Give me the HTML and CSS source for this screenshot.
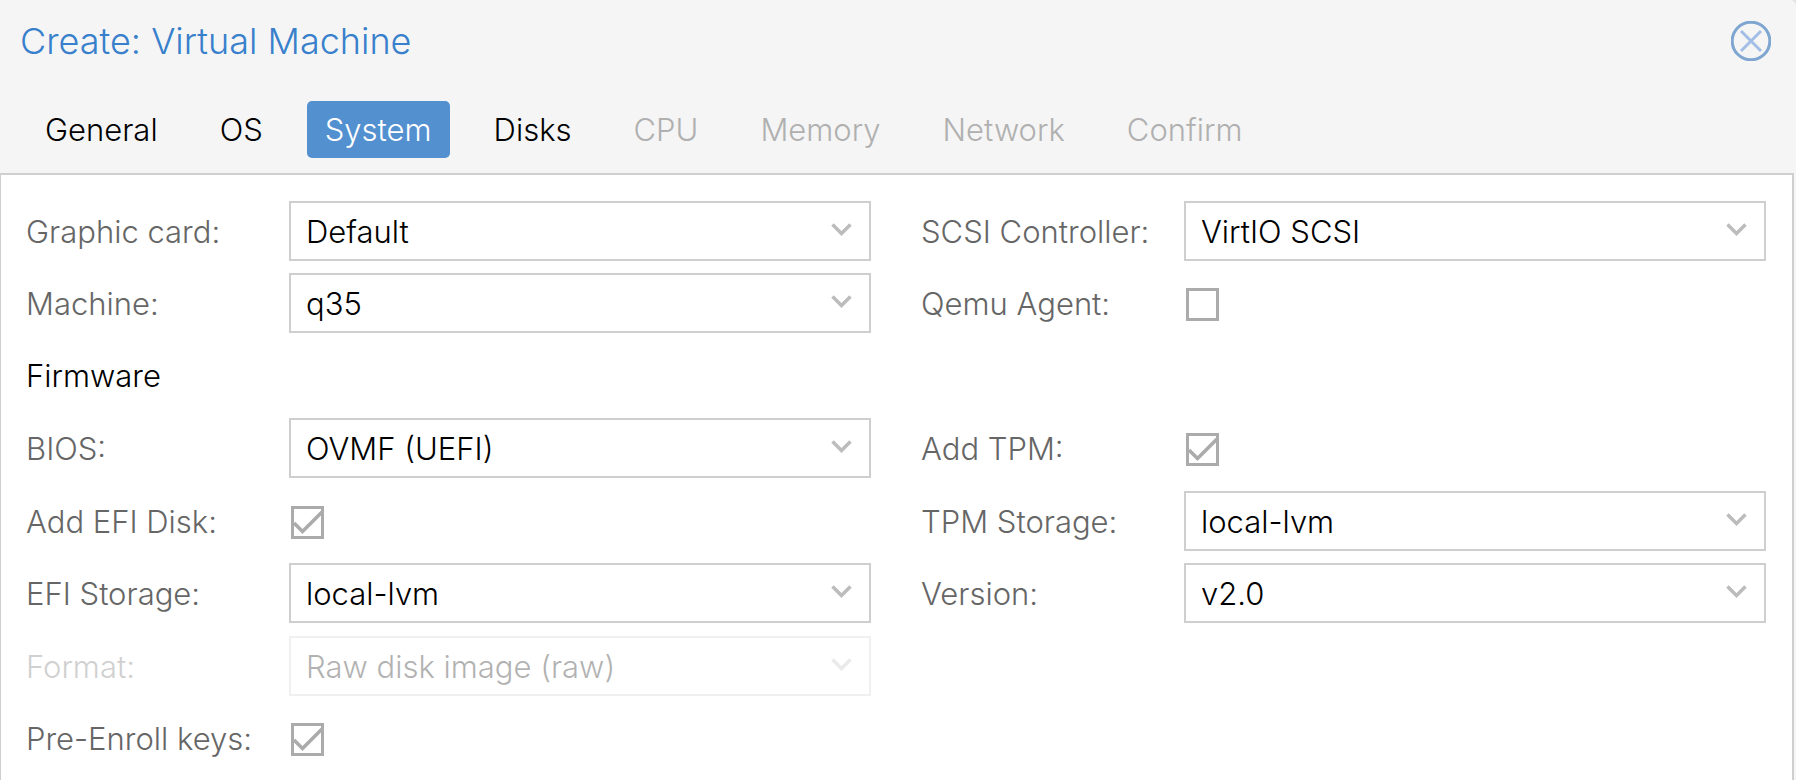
FILE: index.html
```html
<!DOCTYPE html>
<html lang="en">
<head>
<meta charset="utf-8">
<title>Create: Virtual Machine</title>
<link rel="stylesheet" href="styles.css">
</head>
<body>
<svg class="symbols" aria-hidden="true">
  <symbol id="chevron" viewBox="0 0 22 14"><path d="M1.500 1.500 10.500 10.500 19.500 1.500" fill="none" stroke="currentColor" stroke-width="3.500"/></symbol>
  <symbol id="tick" viewBox="0 0 33 33"><path d="M3 17 11.500 25.500 31 6" fill="none" stroke="currentColor" stroke-width="3.600"/></symbol>
</svg>
<main class="dialog">
  <header class="dialog-header">
    <h1 class="title">Create: Virtual Machine</h1>
    <button class="close" type="button" aria-label="Close">
      <svg viewBox="0 0 40 40" aria-hidden="true"><circle cx="20" cy="20" r="18.800" fill="none" stroke="#7fa6d0" stroke-width="3"/><path d="M10 10 30 30M30 10 10 30" fill="none" stroke="#a3bee6" stroke-width="3"/></svg>
    </button>
  </header>
  <nav class="tabs" aria-label="Steps">
    <button class="tab" type="button">General</button>
    <button class="tab" type="button">OS</button>
    <button class="tab active" type="button" aria-current="step">System</button>
    <button class="tab" type="button">Disks</button>
    <button class="tab" type="button" disabled>CPU</button>
    <button class="tab" type="button" disabled>Memory</button>
    <button class="tab" type="button" disabled>Network</button>
    <button class="tab" type="button" disabled>Confirm</button>
  </nav>
  <form class="panel">
    <div class="column">
      <div class="field"><label for="vga">Graphic card:</label><div class="combo"><select id="vga"><option>Default</option></select><svg class="arrow"><use href="#chevron"/></svg></div></div>
      <div class="field"><label for="machine">Machine:</label><div class="combo"><select id="machine"><option>q35</option></select><svg class="arrow"><use href="#chevron"/></svg></div></div>
      <h2 class="section">Firmware</h2>
      <div class="field"><label for="bios">BIOS:</label><div class="combo"><select id="bios"><option>OVMF (UEFI)</option></select><svg class="arrow"><use href="#chevron"/></svg></div></div>
      <div class="field"><label for="efi">Add EFI Disk:</label><div class="check"><input id="efi" type="checkbox" checked><svg class="tick"><use href="#tick"/></svg></div></div>
      <div class="field"><label for="efistorage">EFI Storage:</label><div class="combo"><select id="efistorage"><option>local-lvm</option></select><svg class="arrow"><use href="#chevron"/></svg></div></div>
      <div class="field disabled"><label for="format">Format:</label><div class="combo"><select id="format" disabled><option>Raw disk image (raw)</option></select><svg class="arrow"><use href="#chevron"/></svg></div></div>
      <div class="field"><label for="keys">Pre-Enroll keys:</label><div class="check"><input id="keys" type="checkbox" checked><svg class="tick"><use href="#tick"/></svg></div></div>
    </div>
    <div class="column">
      <div class="field"><label for="scsi">SCSI Controller:</label><div class="combo"><select id="scsi"><option>VirtIO SCSI</option></select><svg class="arrow"><use href="#chevron"/></svg></div></div>
      <div class="field"><label for="agent">Qemu Agent:</label><div class="check"><input id="agent" type="checkbox"><svg class="tick"><use href="#tick"/></svg></div></div>
      <div class="spacer"></div>
      <div class="field"><label for="tpm">Add TPM:</label><div class="check"><input id="tpm" type="checkbox" checked><svg class="tick"><use href="#tick"/></svg></div></div>
      <div class="field"><label for="tpmstorage">TPM Storage:</label><div class="combo"><select id="tpmstorage"><option>local-lvm</option></select><svg class="arrow"><use href="#chevron"/></svg></div></div>
      <div class="field"><label for="version">Version:</label><div class="combo"><select id="version"><option>v2.0</option></select><svg class="arrow"><use href="#chevron"/></svg></div></div>
    </div>
  </form>
</main>
</body>
</html>
```
FILE: styles.css
```css
* { box-sizing: border-box; }

body {
  margin: 0;
  background: #e4e4e4;
  color: #000;
  font: 300 31px/40px Inter, "Liberation Sans", sans-serif;
}

button, select { font: inherit; color: inherit; }

.symbols { position: absolute; width: 0; height: 0; }

.dialog {
  display: flex;
  flex-direction: column;
  min-height: 100vh;
  padding-right: 2px;
  background: #f5f5f5;
  border-top-right-radius: 6px;
}

.dialog-header {
  display: flex;
  align-items: center;
  justify-content: space-between;
  height: 82px;
  padding: 0 23px 0 20px;
}

.title {
  margin: 0;
  font-size: 36px;
  font-weight: 300;
  color: #3880cc;
}

.close {
  width: 40px;
  height: 40px;
  padding: 0;
  border: 0;
  background: none;
}

.close svg { display: block; width: 40px; height: 40px; }

.tabs {
  display: flex;
  gap: 26px;
  padding: 19px 27px 15px;
}

.tab {
  height: 57px;
  padding: 0 18px;
  border: 0;
  border-radius: 5px;
  background: none;
}

.tab.active { background: #5390d0; color: #fff; }
.tab:disabled { color: #b0b0b0; }

.panel {
  display: grid;
  grid-template-columns: 1fr 1fr;
  gap: 50px;
  flex: 1;
  padding: 26px 26px 12px 25px;
  background: #fff;
  border: solid #cfcfcf;
  border-width: 2px 2px 0 1px;
}

.column {
  display: grid;
  grid-auto-rows: 72px 73px;
  align-content: start;
}

.field, .section { height: 60px; }

.field {
  display: grid;
  grid-template-columns: 263px 1fr;
  align-items: center;
}

.field label {
  padding-top: 2px;
  color: #666;
  white-space: nowrap;
}

.field.disabled { opacity: 0.3; }

.section {
  margin: 0;
  font-size: 31px;
  font-weight: 300;
  line-height: 60px;
}

.combo { position: relative; }

.combo select {
  display: block;
  width: 100%;
  height: 60px;
  padding: 2px 60px 0 15px;
  border: 2px solid #cfcfcf;
  border-radius: 0;
  background: #fff;
  appearance: none;
  opacity: 1;
}

.arrow {
  position: absolute;
  top: 22px;
  right: 18px;
  width: 22px;
  height: 14px;
  color: #bcbcbc;
  pointer-events: none;
}

.check {
  position: relative;
  width: 33px;
  height: 33px;
  margin: 3px 0 0 2px;
}

.check input {
  display: block;
  width: 33px;
  height: 33px;
  margin: 0;
  border: 3px solid #ababab;
  background: #fff;
  appearance: none;
}

.tick {
  position: absolute;
  inset: 0;
  width: 33px;
  height: 33px;
  color: #ababab;
  visibility: hidden;
  pointer-events: none;
}

.check input:checked + .tick { visibility: visible; }
```
